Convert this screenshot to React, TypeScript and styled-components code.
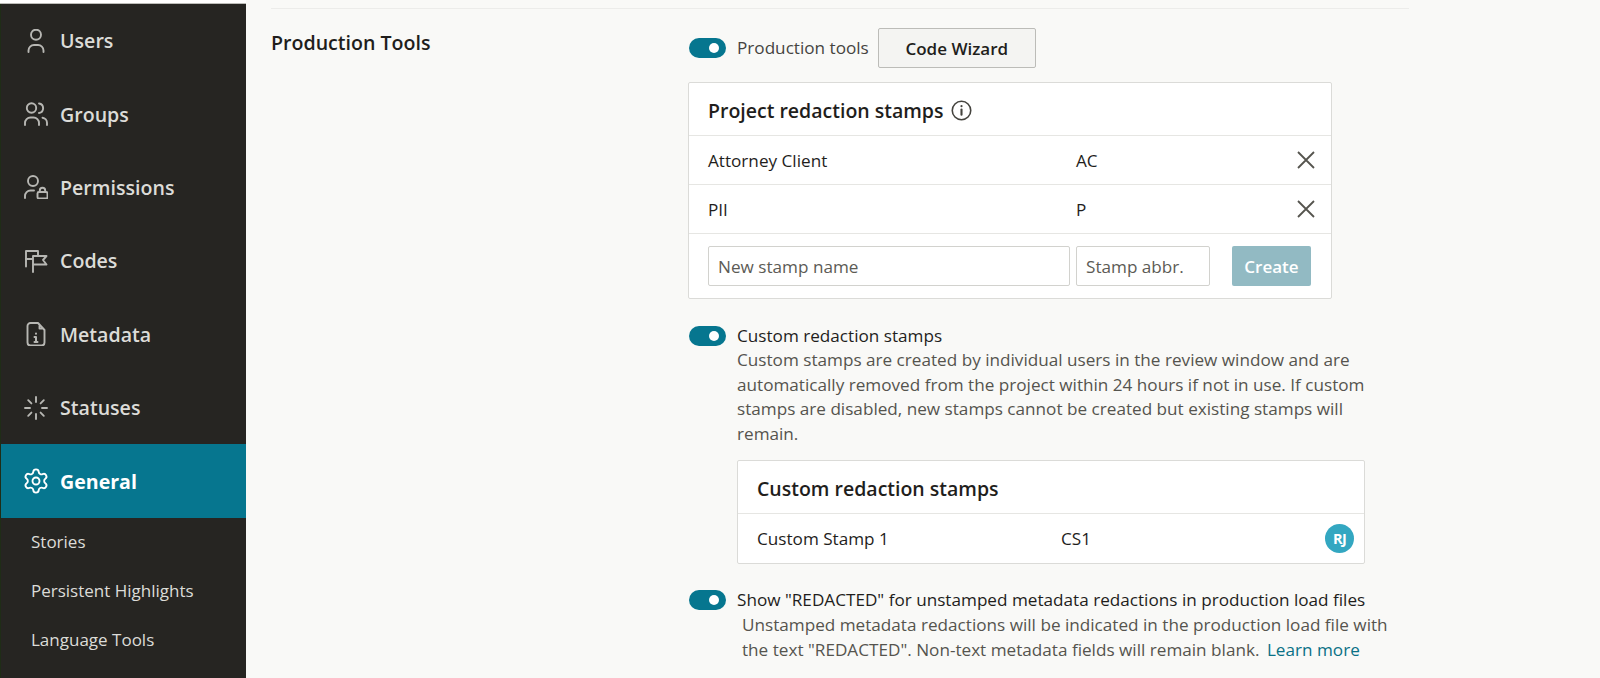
import React from "react";
import styled, { createGlobalStyle } from "styled-components";
import { Settings } from "lucide-react";

const GlobalStyle = createGlobalStyle`
  html, body {
    margin: 0;
    padding: 0;
    height: 678px;
    overflow: hidden;
    background: #f9f9f7;
    font-family: "Open Sans", "Noto Sans", sans-serif;
  }
`;

const Page = styled.div`
  width: 1600px;
  height: 678px;
  overflow: hidden;
  display: flex;
  flex-direction: column;
`;

const TopStrip = styled.div`
  height: 3px;
  background: #ffffff;
  border-bottom: 1px solid #bdbdb9;
  width: 246px;
  flex: none;
`;

const Body = styled.div`
  flex: 1;
  display: flex;
  min-height: 0;
`;

const Sidebar = styled.nav`
  width: 245px;
  margin-left: 1px;
  flex: none;
  background: #262522;
  box-shadow: -1px 0 0 #1f2d17;
  display: flex;
  flex-direction: column;
`;

const NavItem = styled.div<{ $active?: boolean }>`
  height: 73.4px;
  flex: none;
  display: flex;
  align-items: center;
  gap: 12px;
  padding-left: 23px;
  box-sizing: border-box;
  background: ${(p) => (p.$active ? "#06768f" : "transparent")};
  color: ${(p) => (p.$active ? "#ffffff" : "#dcdcd8")};
  font-size: 19.6px;
  font-weight: ${(p) => (p.$active ? 700 : 600)};
`;

const NavIcon = styled.svg`
  width: 24px;
  height: 24px;
  flex: none;
  fill: none;
  stroke: currentColor;
  stroke-width: 1.9;
  stroke-linecap: round;
  stroke-linejoin: round;
  opacity: 0.8;
`;

const Gear = styled(Settings)`
  width: 28px;
  height: 28px;
  margin: -2px;
  flex: none;
`;

const SubNav = styled.div`
  display: flex;
  flex-direction: column;
`;

const SubItem = styled.div`
  height: 49px;
  box-sizing: border-box;
  padding: 0 0 2px 30px;
  display: flex;
  align-items: center;
  color: #dcdcd8;
  font-size: 17px;
`;

const Main = styled.main`
  flex: 1;
  padding-left: 25px;
  min-width: 0;
`;

const Divider = styled.div`
  width: 1138px;
  height: 1px;
  margin-top: 4px;
  background: #ececea;
`;

const Section = styled.section`
  display: flex;
  padding-top: 19px;
`;

const SectionTitle = styled.h2`
  width: 417px;
  flex: none;
  margin: 0;
  padding-top: 3px;
  font-size: 19.6px;
  line-height: 24px;
  font-weight: 600;
  color: #1f1e1c;
`;

const Content = styled.div`
  display: flex;
  flex-direction: column;
  min-width: 0;
`;

const ToggleRow = styled.div<{ $top?: number }>`
  display: flex;
  align-items: center;
  gap: 11px;
  margin-top: ${(p) => p.$top ?? 0}px;
  color: ${(p) => (p.$top === undefined ? "#45443f" : "#1f1e1c")};
  font-size: 17.15px;
  line-height: 24px;
`;

const Switch = styled.span`
  position: relative;
  display: block;
  width: 37px;
  height: 20px;
  margin-left: 1px;
  border-radius: 10px;
  background: #06768f;
  flex: none;

  &::after {
    content: "";
    position: absolute;
    right: 7px;
    top: 5px;
    width: 10px;
    height: 10px;
    border-radius: 50%;
    background: #ffffff;
  }
`;

const Button = styled.button`
  width: 158px;
  height: 40px;
  margin-left: -2px;
  background: #f4f4f2;
  border: 1px solid #bcbcb8;
  border-radius: 2px;
  color: #1f1e1c;
  font: 600 17px "Open Sans", sans-serif;
`;

const Card = styled.div<{ $wide?: boolean }>`
  width: ${(p) => (p.$wide ? 628 : 644)}px;
  margin-left: ${(p) => (p.$wide ? 49 : 0)}px;
  margin-top: 14px;
  box-sizing: border-box;
  background: #ffffff;
  border: 1px solid #dbdbd8;
  border-radius: 2px;
`;

const CardHeader = styled.div`
  height: 53px;
  box-sizing: border-box;
  display: flex;
  align-items: center;
  gap: 7px;
  padding: 2px 19px 0;
  font-size: 19.5px;
  font-weight: 600;
  color: #1f1e1c;
  border-bottom: 1px solid #e6e6e3;
`;

const StampRow = styled.div<{ $wide?: boolean; $bare?: boolean }>`
  height: ${(p) => (p.$bare ? 49 : 48)}px;
  display: grid;
  grid-template-columns: ${(p) => (p.$wide ? "304px 1fr auto" : "368px 1fr auto")};
  align-items: center;
  padding: 0 ${(p) => (p.$wide ? 10 : 15)}px 0 19px;
  font-size: 17.15px;
  color: #1f1e1c;
  border-bottom: ${(p) => (p.$bare ? "none" : "1px solid #e6e6e3")};
`;

const CloseIcon = styled.svg`
  width: 20px;
  height: 20px;
  fill: none;
  stroke: #55544e;
  stroke-width: 1.8;
`;

const CreateForm = styled.div`
  height: 64px;
  display: flex;
  align-items: center;
  padding: 0 20px 0 19px;
`;

const Input = styled.input<{ $w: number }>`
  width: ${(p) => p.$w}px;
  height: 40px;
  box-sizing: border-box;
  margin-right: 6px;
  padding: 0 9px;
  border: 1px solid #d2d2ce;
  border-radius: 2px;
  background: #ffffff;
  font: 17.15px "Open Sans", sans-serif;
  &::placeholder {
    color: #5c5b55;
    opacity: 1;
  }
`;

const CreateButton = styled.button`
  width: 79px;
  height: 40px;
  margin-left: auto;
  border: none;
  border-radius: 2px;
  background: #92bac3;
  color: #ffffff;
  font: 600 17px "Open Sans", sans-serif;
`;

const Description = styled.p<{ $indent?: number; $width: number; $top?: number }>`
  margin: ${(p) => p.$top ?? 0}px 0 0;
  padding-left: ${(p) => p.$indent ?? 49}px;
  width: ${(p) => p.$width}px;
  box-sizing: border-box;
  color: #55544e;
  font-size: 17.15px;
  line-height: 24.6px;
`;

const Avatar = styled.span`
  width: 29px;
  height: 29px;
  border-radius: 50%;
  background: #33a7c1;
  color: #ffffff;
  display: flex;
  align-items: center;
  justify-content: center;
  font-size: 14.5px;
  font-weight: 700;
  letter-spacing: -0.8px;
`;

const LearnMore = styled.a`
  color: #0a7186;
  margin-left: 3px;
`;

const InfoIcon = styled.svg`
  width: 21px;
  height: 21px;
  fill: none;
  stroke: #45443f;
  stroke-width: 1.5;
  stroke-linecap: round;
`;

const navItems: { label: string; icon: React.ReactNode }[] = [
  {
    label: "Users",
    icon: (
      <>
        <circle cx="12" cy="5.700" r="5" />
        <path d="M4.500 23v-1.500a5.500 5.500 0 0 1 5.500-5.500h4a5.500 5.500 0 0 1 5.500 5.500V23" />
      </>
    ),
  },
  {
    label: "Groups",
    icon: (
      <>
        <circle cx="7.500" cy="6" r="4.700" />
        <path d="M15 1.500a4.800 4.800 0 0 1 0 9.500" />
        <path d="M1 23v-2a5.500 5.500 0 0 1 5.500-5.500h3a5.500 5.500 0 0 1 5.500 5.500v2" />
        <path d="M18.500 15.700a5.200 5.200 0 0 1 4.500 5.200V23" />
      </>
    ),
  },
  {
    label: "Permissions",
    icon: (
      <>
        <circle cx="9" cy="6" r="5" />
        <path d="M1 23v-2A5.500 5.500 0 0 1 6.500 15.500H10" />
        <rect x="13.500" y="17" width="10" height="6.500" rx="1.500" />
        <path d="M15.800 17v-1.500a2.700 2.700 0 0 1 5.400 0V17" />
      </>
    ),
  },
  {
    label: "Codes",
    icon: (
      <>
        <path d="M2 17.500V2h12v5" />
        <path d="M2 10h6" />
        <path d="M9 23V7h13.500l-3.500 4 3.500 4.500H9" />
      </>
    ),
  },
  {
    label: "Metadata",
    icon: (
      <>
        <path d="M14 1H6.500A3 3 0 0 0 3.500 4v16.500a3 3 0 0 0 3 3h11a3 3 0 0 0 3-3V8z" />
        <path d="M15.500 4v2.500H18" />
        <path d="M12 11.500v.3M10.500 15H12v5M10.500 20h3" strokeWidth="2" />
      </>
    ),
  },
  {
    label: "Statuses",
    icon: (
      <>
        <path d="M12 1v5M12 18v5M1 12h5M18 12h5M4.200 4.200l3.200 3.200M16.600 16.600l3.200 3.200M4.200 19.800l3.200-3.200M16.600 7.400l3.200-3.200" />
      </>
    ),
  },
];

const Close = () => (
  <CloseIcon viewBox="0 0 20 20">
    <path d="M2 2l16 16M18 2L2 18" />
  </CloseIcon>
);

export default function App() {
  return (
    <Page>
      <GlobalStyle />
      <TopStrip />
      <Body>
        <Sidebar>
          {navItems.map((item) => (
            <NavItem key={item.label}>
              <NavIcon viewBox="0 0 24 24">{item.icon}</NavIcon>
              {item.label}
            </NavItem>
          ))}
          <NavItem $active>
            <Gear strokeWidth={1.6} />
            General
          </NavItem>
          <SubNav>
            <SubItem>Stories</SubItem>
            <SubItem>Persistent Highlights</SubItem>
            <SubItem>Language Tools</SubItem>
          </SubNav>
        </Sidebar>
        <Main>
          <Divider />
          <Section>
            <SectionTitle>Production Tools</SectionTitle>
            <Content>
              <ToggleRow>
                <Switch />
                Production tools
                <Button>Code Wizard</Button>
              </ToggleRow>
              <Card>
                <CardHeader>
                  Project redaction stamps
                  <InfoIcon viewBox="0 0 20 20">
                    <circle cx="10" cy="10" r="8.800" />
                    <path d="M10 9v5" strokeWidth="2" />
                    <path d="M10 5.800v.2" strokeWidth="2" />
                  </InfoIcon>
                </CardHeader>
                <StampRow>
                  <span>Attorney Client</span>
                  <span>AC</span>
                  <Close />
                </StampRow>
                <StampRow>
                  <span>PII</span>
                  <span>P</span>
                  <Close />
                </StampRow>
                <CreateForm>
                  <Input $w={362} placeholder="New stamp name" />
                  <Input $w={134} placeholder="Stamp abbr." />
                  <CreateButton>Create</CreateButton>
                </CreateForm>
              </Card>
              <ToggleRow $top={25}>
                <Switch />
                Custom redaction stamps
              </ToggleRow>
              <Description $width={689}>
                Custom stamps are created by individual users in the review window and are
                automatically removed from the project within 24 hours if not in use. If custom
                stamps are disabled, new stamps cannot be created but existing stamps will
                remain.
              </Description>
              <Card $wide>
                <CardHeader>Custom redaction stamps</CardHeader>
                <StampRow $wide $bare>
                  <span>Custom Stamp 1</span>
                  <span>CS1</span>
                  <Avatar>RJ</Avatar>
                </StampRow>
              </Card>
              <ToggleRow $top={24}>
                <Switch />
                Show "REDACTED" for unstamped metadata redactions in production load files
              </ToggleRow>
              <Description $indent={54} $width={712} $top={1}>
                Unstamped metadata redactions will be indicated in the production load file with
                the text "REDACTED". Non-text metadata fields will remain blank.
                <LearnMore> Learn more</LearnMore>
              </Description>
            </Content>
          </Section>
        </Main>
      </Body>
    </Page>
  );
}
